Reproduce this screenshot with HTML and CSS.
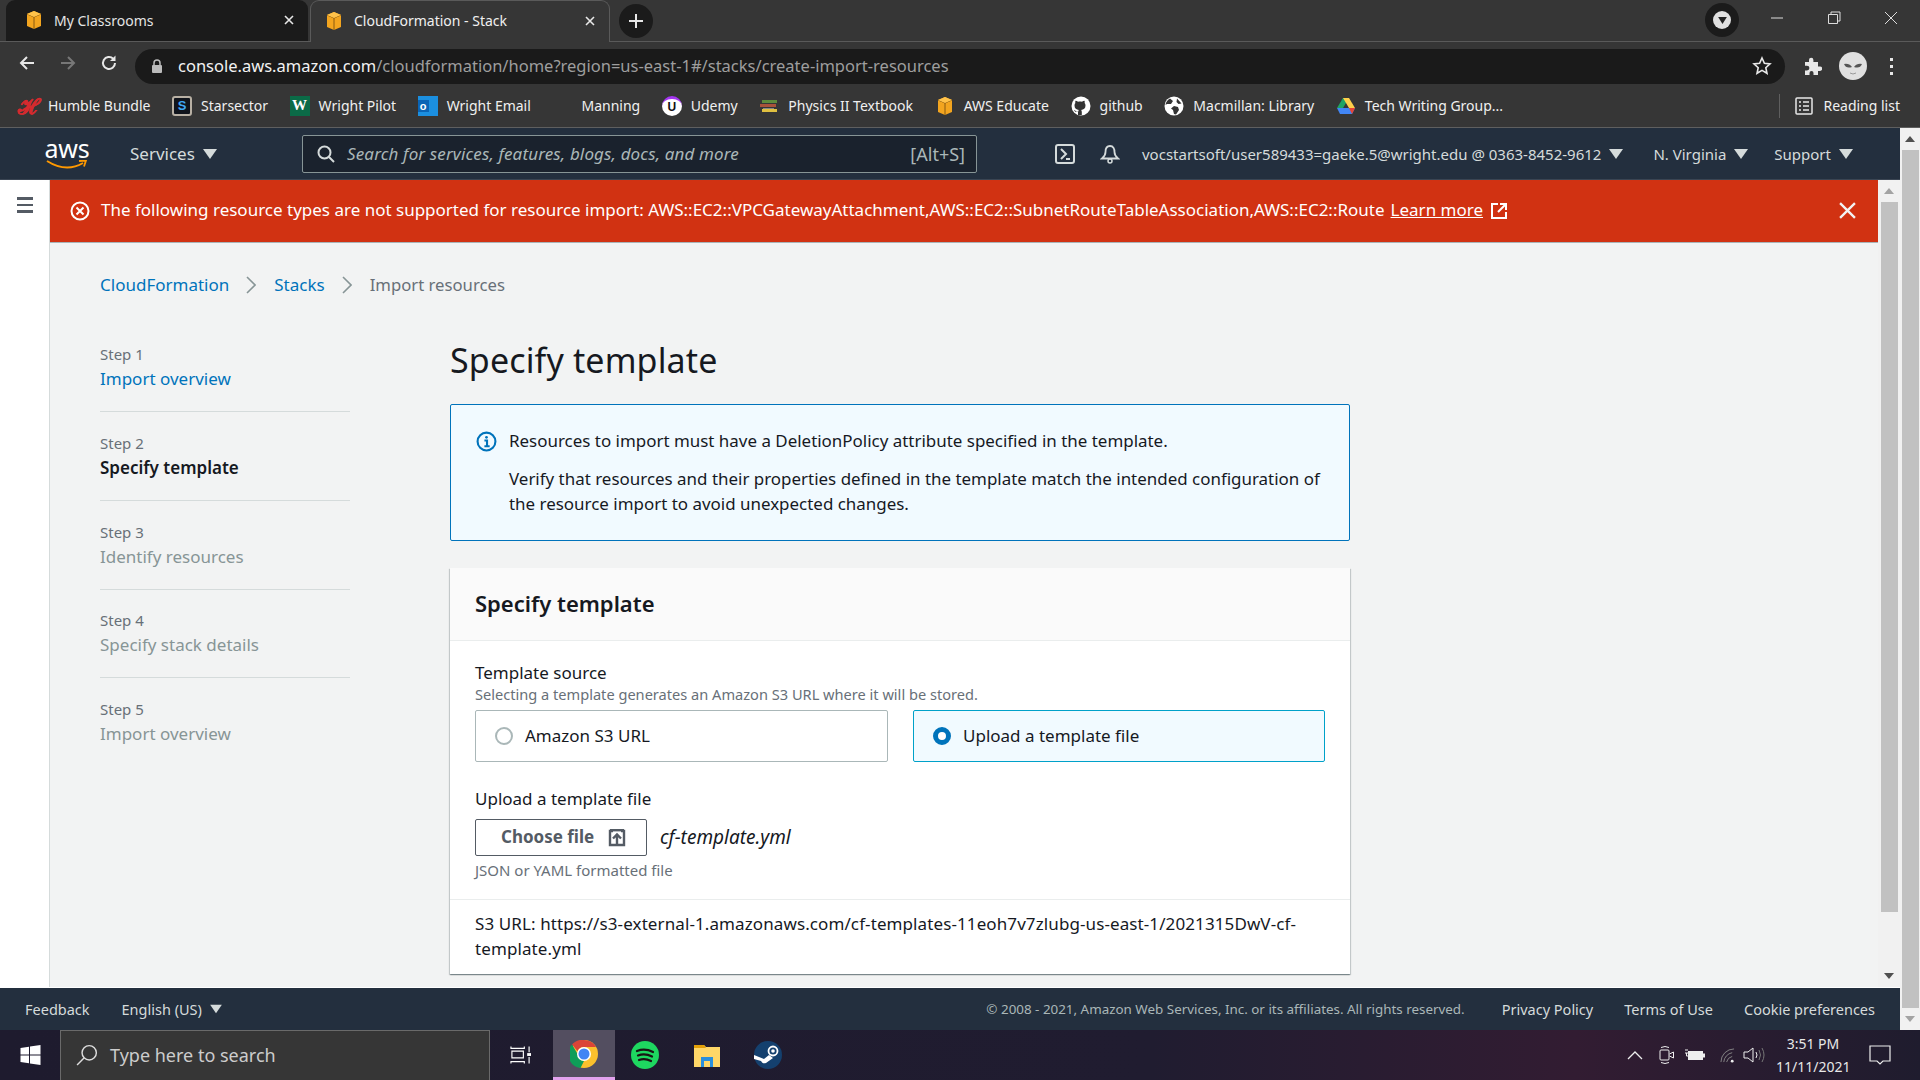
FILE: index.html
```html
<!DOCTYPE html>
<html lang="en">
<head>
<meta charset="utf-8">
<title>CloudFormation - Stack</title>
<link rel="stylesheet" href="styles.css">
</head>
<body>
<svg class="defs" width="0" height="0" aria-hidden="true">
  <symbol id="cube" viewBox="0 0 20 20">
    <path d="M10 1 L17 4 V16 L10 19 L3 16 V4Z" fill="#f3a51f"/>
    <path d="M3 4 L10 7 L17 4" fill="none" stroke="#8a5a10" stroke-width="1"/>
    <path d="M10 7 V19" stroke="#8a5a10" stroke-width="1"/>
    <path d="M10 1 L17 4 L10 7 L3 4Z" fill="#ffc24a"/>
  </symbol>
  <symbol id="caret" viewBox="0 0 14 12"><path d="M0 1 H14 L7 11Z" fill="#d5dbdb"/></symbol>
</svg>
<div class="shell">
  <div class="tabbar">
    <div class="tab tab-off">
      <svg class="tab-ico"><use href="#cube"/></svg>
      <span class="tab-title">My Classrooms</span>
      <svg class="tab-x" viewBox="0 0 10 10"><path d="M1 1 9 9M9 1 1 9" stroke="#e8e8e8" stroke-width="1.6"/></svg>
    </div>
    <div class="tab tab-on">
      <svg class="tab-ico"><use href="#cube"/></svg>
      <span class="tab-title">CloudFormation - Stack</span>
      <svg class="tab-x" viewBox="0 0 10 10"><path d="M1 1 9 9M9 1 1 9" stroke="#e8e8e8" stroke-width="1.6"/></svg>
    </div>
    <div class="newtab"><svg viewBox="0 0 14 14" width="14" height="14"><path d="M7 0V14M0 7H14" stroke="#e8e8e8" stroke-width="2"/></svg></div>
    <div class="spacer"></div>
    <div class="media"><span class="media-dot"><svg viewBox="0 0 10 8" width="9" height="7"><path d="M0 0H10L5 8Z" fill="#222"/></svg></span></div>
    <svg class="win-btn" viewBox="0 0 14 14"><path d="M1 7H13" stroke="#ddd" stroke-width="1"/></svg>
    <svg class="win-btn" viewBox="0 0 14 14"><path d="M1.500 3.500H10.500V12.500H1.500ZM4 3.500V1H13V10H10.500" fill="none" stroke="#ddd" stroke-width="1"/></svg>
    <svg class="win-btn" viewBox="0 0 14 14"><path d="M1 1 13 13M13 1 1 13" stroke="#ddd" stroke-width="1"/></svg>
  </div>

  <div class="toolbar">
    <svg class="nav-ico" viewBox="0 0 18 18"><path d="M16 9H3M9 3 3 9l6 6" fill="none" stroke="#e8e8e8" stroke-width="2"/></svg>
    <svg class="nav-ico" viewBox="0 0 18 18"><path d="M2 9H15M9 3l6 6-6 6" fill="none" stroke="#777" stroke-width="2"/></svg>
    <svg class="nav-ico" viewBox="0 0 18 18"><path d="M15 9a6 6 0 1 1-1.800-4.300" fill="none" stroke="#e8e8e8" stroke-width="2"/><path d="M15.500 1.500V7H10Z" fill="#e8e8e8"/></svg>
    <div class="omnibox">
      <svg class="lock" viewBox="0 0 12 14"><rect x="1" y="6" width="10" height="8" rx="1" fill="#bbb"/><path d="M3 6V4a3 3 0 0 1 6 0v2" fill="none" stroke="#bbb" stroke-width="1.500"/></svg>
      <span class="url"><b>console.aws.amazon.com</b>/cloudformation/home?region=us-east-1#/stacks/create-import-resources</span>
      <svg class="star" viewBox="0 0 20 20"><path d="M10 2l2.400 5.300 5.600.6-4.200 3.800 1.200 5.600L10 14.400l-5 2.900 1.200-5.600L2 7.900l5.600-.6z" fill="none" stroke="#e8e8e8" stroke-width="1.600"/></svg>
    </div>
    <svg class="puzzle" viewBox="0 0 20 20"><path d="M3 6h4V4a2.200 2.200 0 0 1 4.400 0v2H16v4.500h2a2.200 2.200 0 0 1 0 4.400h-2V19H11.500v-2a2 2 0 0 0-4 0v2H3v-4.500h2a2.400 2.400 0 0 0 0-4.800H3z" fill="#e8e8e8"/></svg>
    <div class="avatar"><svg viewBox="0 0 28 28" width="28" height="28"><circle cx="14" cy="14" r="14" fill="#e0e0e0"/><path d="M5 12q5-1 8 3-6 2-8-3ZM23 12q-5-1-8 3 6 2 8-3Z" fill="#555"/><path d="M11 21q3 2 6 0" stroke="#999" fill="none"/></svg></div>
    <div class="kebab"><i></i><i></i><i></i></div>
  </div>

  <div class="bookmarks">
    <div class="bm"><span class="bi bi-h">ℋ</span><span>Humble Bundle</span></div>
    <div class="bm"><span class="bi bi-s">S</span><span>Starsector</span></div>
    <div class="bm"><span class="bi bi-w">W</span><span>Wright Pilot</span></div>
    <div class="bm"><span class="bi bi-o"><span class="bi-o-l">o</span></span><span>Wright Email</span></div>
    <div class="bm"><span class="bi bi-m"></span><span>Manning</span></div>
    <div class="bm"><span class="bi bi-u">U</span><span>Udemy</span></div>
    <div class="bm"><svg class="bi" viewBox="0 0 20 20"><rect x="3" y="4" width="15" height="3" fill="#5d8a3c"/><rect x="1" y="8" width="16" height="3" fill="#a8533a"/><rect x="4" y="12" width="11" height="1" fill="#888"/><rect x="3" y="13" width="15" height="3" fill="#e0c040"/></svg><span>Physics II Textbook</span></div>
    <div class="bm"><svg class="bi"><use href="#cube"/></svg><span>AWS Educate</span></div>
    <div class="bm"><svg class="bi" viewBox="0 0 20 20"><circle cx="10" cy="10" r="9.500" fill="#fff"/><path d="M7 19v-3c-3 .5-3.500-1-4-2 1 0 1.500 1 2 1.500 1 .7 2 .2 2.300 0 0-.8.300-1.200.6-1.500-2.500-.3-4.400-1.500-4.400-4.500 0-1 .3-1.800.9-2.400-.2-.5-.3-1.500.1-2.300 1 0 1.800.4 2.500 1 1.500-.4 2.500-.4 4 0 .7-.6 1.500-1 2.500-1 .4.800.3 1.800.1 2.300.6.6.9 1.400.9 2.400 0 3-1.900 4.200-4.400 4.500.4.400.7 1 .7 2v3z" fill="#333"/></svg><span>github</span></div>
    <div class="bm"><svg class="bi" viewBox="0 0 20 20"><circle cx="10" cy="10" r="9.500" fill="#fff"/><path d="M6 2.500 9 5 7 8 3 8 1.500 9A8.500 8.500 0 0 1 6 2.500ZM10 10l4 1 1 3-3 4.500-2-.5-1-4-2-1.500ZM13 2.500l4.500 5-3 .5-2-2z" fill="#333"/></svg><span>Macmillan: Library</span></div>
    <div class="bm"><svg class="bi" viewBox="0 0 20 20"><path d="M7 2h6L7 12H1z" fill="#1fa463"/><path d="M13 2l6 10h-6L7 2z" fill="#ffd04b"/><path d="M1 12l3 6h12l3-6z" fill="#4286f5"/><path d="M19 12l-3 6-3-6z" fill="#ea4335"/></svg><span>Tech Writing Group...</span></div>
    <div class="spacer"></div>
    <div class="bm-sep"></div>
    <div class="bm bm-last"><svg class="bi" viewBox="0 0 20 20"><rect x="2" y="2" width="16" height="16" rx="1" fill="none" stroke="#e8e8e8" stroke-width="1.500"/><path d="M5 6h2M9 6h6M5 10h2M9 10h6M5 14h2M9 14h6" stroke="#e8e8e8" stroke-width="1.500"/></svg><span>Reading list</span></div>
  </div>

  <div class="viewport">
    <div class="page">
      <header class="awsbar">
        <div class="aws-logo"><span class="aws-word">aws</span><svg viewBox="0 0 42 10" width="42" height="10"><path d="M1 1q19 12 36 2" fill="none" stroke="#f90" stroke-width="2"/><path d="M33 1l7-.5-2 6" fill="none" stroke="#f90" stroke-width="1.800"/></svg></div>
        <div class="menu services"><span>Services</span><svg class="caret"><use href="#caret"/></svg></div>
        <div class="search">
          <svg class="search-ico" viewBox="0 0 18 18"><circle cx="7.500" cy="7.500" r="6" fill="none" stroke="#d5dbdb" stroke-width="2"/><path d="M12 12l5 5" stroke="#d5dbdb" stroke-width="2"/></svg>
          <span class="search-ph">Search for services, features, blogs, docs, and more</span>
          <span class="search-key">[Alt+S]</span>
        </div>
        <svg class="hdr-ico term" viewBox="0 0 20 20"><rect x="1" y="1" width="18" height="18" rx="2" fill="none" stroke="#d5dbdb" stroke-width="2"/><path d="M6 5l5 5-5 5M11 15h4" fill="none" stroke="#d5dbdb" stroke-width="2"/></svg>
        <svg class="hdr-ico bell" viewBox="0 0 20 20"><path d="M10 2c-3.500 0-4.500 3-4.500 6 0 3-1 4.500-3.500 6.500h16C15.500 12.500 14.500 11 14.500 8c0-3-1-6-4.500-6Z" fill="none" stroke="#d5dbdb" stroke-width="1.800"/><circle cx="10" cy="17" r="2" fill="none" stroke="#d5dbdb" stroke-width="1.500"/></svg>
        <div class="menu acct"><span>vocstartsoft/user589433=gaeke.5@wright.edu @ 0363-8452-9612</span><svg class="caret"><use href="#caret"/></svg></div>
        <div class="menu region"><span>N. Virginia</span><svg class="caret"><use href="#caret"/></svg></div>
        <div class="menu support"><span>Support</span><svg class="caret"><use href="#caret"/></svg></div>
      </header>

      <div class="workspace">
        <aside class="rail">
          <div class="burger"><i></i><i></i><i></i></div>
        </aside>
        <main class="main">
          <div class="banner">
            <svg class="banner-ico" viewBox="0 0 20 20"><circle cx="10" cy="10" r="8.500" fill="none" stroke="#fff" stroke-width="2"/><path d="M6.500 6.500l7 7M13.500 6.500l-7 7" stroke="#fff" stroke-width="2"/></svg>
            <span class="banner-text">The following resource types are not supported for resource import: AWS::EC2::VPCGatewayAttachment,AWS::EC2::SubnetRouteTableAssociation,AWS::EC2::Route</span>
            <a class="banner-link">Learn more</a>
            <svg class="banner-ext" viewBox="0 0 18 18"><path d="M8 2H2V16H16V10M10 2h6v6M16 2 8 10" fill="none" stroke="#fff" stroke-width="2"/></svg>
            <div class="spacer"></div>
            <svg class="banner-x" viewBox="0 0 16 16"><path d="M1 1 15 15M15 1 1 15" stroke="#f2f3f3" stroke-width="2.200"/></svg>
          </div>
          <div class="content">
            <nav class="crumbs">
              <a class="link">CloudFormation</a>
              <svg class="crumb-sep" viewBox="0 0 10 18"><path d="M1 1l8 8-8 8" fill="none" stroke="#879596" stroke-width="1.600"/></svg>
              <a class="link">Stacks</a>
              <svg class="crumb-sep" viewBox="0 0 10 18"><path d="M1 1l8 8-8 8" fill="none" stroke="#879596" stroke-width="1.600"/></svg>
              <span class="crumb-now">Import resources</span>
            </nav>
            <div class="wizard">
              <ol class="steps">
                <li class="step"><div class="step-no">Step 1</div><a class="link step-name">Import overview</a></li>
                <li class="step"><div class="step-no">Step 2</div><div class="step-name step-active">Specify template</div></li>
                <li class="step"><div class="step-no">Step 3</div><div class="step-name step-off">Identify resources</div></li>
                <li class="step"><div class="step-no">Step 4</div><div class="step-name step-off">Specify stack details</div></li>
                <li class="step step-last"><div class="step-no">Step 5</div><div class="step-name step-off">Import overview</div></li>
              </ol>
              <section class="form">
                <h1 class="title">Specify template</h1>
                <div class="info">
                  <svg class="info-ico" viewBox="0 0 20 20"><circle cx="10" cy="10" r="8.500" fill="none" stroke="#0073bb" stroke-width="2"/><circle cx="10" cy="6" r="1.300" fill="#0073bb"/><path d="M8 9h2.500v5M8 14.500h5" fill="none" stroke="#0073bb" stroke-width="2"/></svg>
                  <div class="info-body">
                    <p>Resources to import must have a DeletionPolicy attribute specified in the template.</p>
                    <p>Verify that resources and their properties defined in the template match the intended configuration of the resource import to avoid unexpected changes.</p>
                  </div>
                </div>
                <div class="card">
                  <div class="card-head"><h2>Specify template</h2></div>
                  <div class="card-body">
                    <div class="label">Template source</div>
                    <div class="hint">Selecting a template generates an Amazon S3 URL where it will be stored.</div>
                    <div class="tiles">
                      <div class="tile"><span class="radio"></span><span>Amazon S3 URL</span></div>
                      <div class="tile tile-on"><span class="radio radio-on"></span><span>Upload a template file</span></div>
                    </div>
                    <div class="label label-up">Upload a template file</div>
                    <div class="file-row">
                      <div class="btn"><span>Choose file</span><svg class="btn-ico" viewBox="0 0 18 18"><path d="M5 2H2V16H16V2H13" fill="none" stroke="#545b64" stroke-width="2.400"/><path d="M2 1.200H16" stroke="#545b64" stroke-width="2.400"/><path d="M9 16V6M5 9.500l4-4 4 4" fill="none" stroke="#545b64" stroke-width="2.400"/></svg></div>
                      <span class="file-name">cf-template.yml</span>
                    </div>
                    <div class="hint hint-file">JSON or YAML formatted file</div>
                  </div>
                  <div class="card-foot">S3 URL: https://s3-external-1.amazonaws.com/cf-templates-11eoh7v7zlubg-us-east-1/2021315DwV-cf-template.yml</div>
                </div>
              </section>
            </div>
          </div>
        </main>
        <div class="sb sb-inner">
          <svg class="sb-arrow" viewBox="0 0 10 6"><path d="M0 6H10L5 0Z" fill="#a3a3a3"/></svg>
          <div class="sb-thumb"></div>
          <svg class="sb-arrow" viewBox="0 0 10 6"><path d="M0 0H10L5 6Z" fill="#505050"/></svg>
        </div>
      </div>

      <footer class="foot">
        <span>Feedback</span>
        <div class="menu lang"><span>English (US)</span><svg class="caret"><use href="#caret"/></svg></div>
        <div class="spacer"></div>
        <span class="copy">© 2008 - 2021, Amazon Web Services, Inc. or its affiliates. All rights reserved.</span>
        <span class="foot-l1">Privacy Policy</span>
        <span class="foot-l">Terms of Use</span>
        <span class="foot-l">Cookie preferences</span>
      </footer>
    </div>
    <div class="sb sb-outer">
      <svg class="sb-arrow" viewBox="0 0 10 6"><path d="M0 6H10L5 0Z" fill="#505050"/></svg>
      <div class="sb-thumb"></div>
      <svg class="sb-arrow" viewBox="0 0 10 6"><path d="M0 0H10L5 6Z" fill="#a3a3a3"/></svg>
    </div>
  </div>

  <div class="taskbar">
    <svg class="winlogo" viewBox="0 0 20 20"><path d="M0 3l8.500-1.200V9.500H0ZM9.500 1.600 20 0V9.500H9.500ZM0 10.500h8.500v7.700L0 17ZM9.500 10.500H20V20L9.500 18.400Z" fill="#fff"/></svg>
    <div class="ts-box">
      <svg class="ts-ico" viewBox="0 0 20 20"><circle cx="12" cy="8" r="6.500" fill="none" stroke="#ddd" stroke-width="1.300"/><path d="M7.500 12.500 1 19" stroke="#ddd" stroke-width="1.300"/></svg>
      <span>Type here to search</span>
    </div>
    <svg class="tv" viewBox="0 0 22 20"><path d="M1 1v2H15V1M2 6H14V13H2ZM1 19v-2H15v2M20 1V7M20 12V19" fill="none" stroke="#fff" stroke-width="1.200"/><rect x="18" y="8" width="4" height="3" fill="#fff"/></svg>
    <div class="app app-on"><svg viewBox="0 0 28 28" width="28" height="28"><circle cx="14" cy="14" r="14" fill="#fbc02d"/><path d="M14 0a14 14 0 0 1 12.100 7H14a7 7 0 0 0-6.400 4.200L2 4.500A14 14 0 0 1 14 0Z" fill="#db4437"/><path d="M2 4.500 8 14.800a7 7 0 0 0 6 6.200L10.500 28A14 14 0 0 1 2 4.500Z" fill="#0f9d58"/><circle cx="14" cy="14" r="7" fill="#fff"/><circle cx="14" cy="14" r="5.500" fill="#4285f4"/></svg></div>
    <div class="app"><svg viewBox="0 0 28 28" width="28" height="28"><circle cx="14" cy="14" r="14" fill="#1ed760"/><path d="M6 10q8-3 16 1M7 14.500q7-2.500 14 1M8 19q6-2 12 1" fill="none" stroke="#191414" stroke-width="2.200" stroke-linecap="round"/></svg></div>
    <div class="app"><svg viewBox="0 0 28 28" width="28" height="28"><path d="M1 4h10l2 2H27V26H1Z" fill="#ffd768"/><path d="M1 4h10l2 3H1Z" fill="#e3a008"/><path d="M8 26V16H20V26H17V20H11V26Z" fill="#2a8fdc"/></svg></div>
    <div class="app"><svg viewBox="0 0 28 28" width="28" height="28"><circle cx="14" cy="14" r="14" fill="#14406e"/><circle cx="19" cy="10" r="4.500" fill="none" stroke="#fff" stroke-width="1.800"/><circle cx="19" cy="10" r="1.800" fill="#fff"/><path d="M0 14 10 18l5-4 4 3-7 5a4 4 0 0 1-5-2L0 18Z" fill="#fff"/></svg></div>
    <div class="spacer"></div>
    <div class="tray">
      <svg class="t-chev" viewBox="0 0 16 10"><path d="M1 9l7-7 7 7" fill="none" stroke="#eee" stroke-width="1.300"/></svg>
      <svg class="t-ic" viewBox="0 0 16 20"><rect x="1" y="5" width="9" height="10" rx="1" fill="none" stroke="#eee"/><path d="M10.500 9l4-2v6l-4-2M2 2.500q4-2 8 0M2 17.500q4 2 8 0" fill="none" stroke="#eee"/></svg>
      <svg class="t-bat" viewBox="0 0 20 14"><path d="M0 2h3M0 5h3M1.500 5v3h2" stroke="#eee" fill="none"/><rect x="3" y="3" width="15" height="9" fill="#eee"/><rect x="18" y="5.500" width="2" height="4" fill="#eee"/></svg>
      <svg class="t-wifi" viewBox="0 0 16 16"><path d="M1 15A14 14 0 0 1 15 1M4 15A11 11 0 0 1 13 5M7 15a8 8 0 0 1 6-6" fill="none" stroke="#888" stroke-width="1"/><circle cx="13" cy="14" r="1.500" fill="#eee"/></svg>
      <svg class="t-snd" viewBox="0 0 22 20"><path d="M1 7H5L10 3V17L5 13H1Z" fill="none" stroke="#eee"/><path d="M13 7q2 3 0 6" fill="none" stroke="#eee"/><path d="M16 5q3 5 0 10M19 3q4 7 0 14" fill="none" stroke="#777"/></svg>
      <div class="clock"><div>3:51 PM</div><div>11/11/2021</div></div>
      <svg class="t-note" viewBox="0 0 22 20"><path d="M1 1H21V16H14L11 19 8 16H1Z" fill="none" stroke="#eee" stroke-width="1.200"/></svg>
    </div>
  </div>
</div>
</body>
</html>
```

FILE: styles.css
```css
* { box-sizing: border-box; }
html, body { margin: 0; padding: 0; height: 1080px; overflow: hidden; }
body { font-family: "Noto Sans", "Open Sans", sans-serif; font-size: 17px; color: #16191f; }
p, h1, h2, ol { margin: 0; padding: 0; }
.defs { position: absolute; }
.spacer { flex: 1; }
.shell { width: 1920px; height: 1080px; display: flex; flex-direction: column; }

/* browser tabs */
.tabbar { height: 42px; background: #363636; display: flex; align-items: flex-end; padding: 0 22px 0 6px; border-bottom: 1px solid #5a5a5a; flex: none; }
.tab { width: 302px; height: 41px; display: flex; align-items: center; padding-left: 18px; padding-right: 14px; padding-bottom: 1px; font-size: 14px; color: #e4e4e4; border-radius: 9px 9px 0 0; }
.tab-off { background: #1b1b1b; }
.tab-on { background: #363636; border: 1px solid #5a5a5a; border-bottom: 0; margin-left: 2px; width: 300px; height: 42px; margin-bottom: -1px; padding-left: 13px; padding-bottom: 2px; color: #f0f0f0; }
.tab-ico { width: 20px; height: 20px; flex: none; margin-right: 10px; }
.tab-title { flex: 1; }
.tab-x { width: 10px; height: 12px; }
.newtab { width: 34px; height: 34px; border-radius: 50%; background: #1b1b1b; display: flex; align-items: center; justify-content: center; margin: 0 0 3px 9px; }
.media { width: 34px; height: 34px; border-radius: 50%; background: #1b1b1b; display: flex; align-items: center; justify-content: center; margin: 0 0 4px 0; }
.media-dot { width: 18px; height: 18px; border-radius: 50%; background: #e0e0e0; display: flex; align-items: center; justify-content: center; }
.win-btn { width: 14px; height: 14px; margin: 0 0 16px 31px; }
.win-btn + .win-btn { margin-left: 43px; }

/* toolbar */
.toolbar { height: 42px; background: #363636; display: flex; align-items: center; padding-left: 18px; flex: none; }
.nav-ico { width: 18px; height: 18px; margin-right: 23px; flex: none; }
.omnibox { width: 1650px; margin-left: -6px; margin-top: 6px; height: 35px; border-radius: 18px; background: #1a1a1a; display: flex; align-items: center; padding-left: 16px; padding-right: 13px; flex: none; }
.lock { width: 12px; height: 14px; margin-right: 15px; }
.url { flex: 1; font-size: 16.500px; color: #9e9e9e; white-space: nowrap; padding-bottom: 2px; }
.url b { font-weight: 400; color: #f2f2f2; }
.star { width: 20px; height: 20px; }
.puzzle { width: 20px; height: 20px; margin: 6px 0 0 17px; flex: none; }
.avatar { width: 28px; height: 28px; margin: 6px 0 0 17px; flex: none; }
.kebab { width: 4px; margin: 6px 0 0 23px; display: flex; flex-direction: column; gap: 4px; flex: none; }
.kebab i { width: 3px; height: 3px; background: #e8e8e8; display: block; }

/* bookmarks */
.bookmarks { height: 44px; background: #363636; border-bottom: 1px solid #5f5f5f; display: flex; align-items: center; padding: 0 20px 0 19px; gap: 21.600px; font-size: 14px; color: #f0f0f0; flex: none; }
.bm { display: flex; align-items: center; gap: 9px; white-space: nowrap; }
.bi { width: 20px; height: 20px; flex: none; display: flex; align-items: center; justify-content: center; }
.bi-h { font: 700 21px "DejaVu Serif", serif; color: #d42a2e; -webkit-text-stroke: .5px #d42a2e; }
.bi-s { background: #10141c; border: 2px solid #b8b0a4; border-radius: 3px; color: #3fa9f5; font: 700 13px "Liberation Sans", sans-serif; }
.bi-w { background: #0b6b47; color: #fff; font: 700 15px "Liberation Serif", serif; }
.bi-o { background: #1b8fe0; position: relative; justify-content: flex-start; }
.bi-o-l { background: #0a64b5; color: #fff; font: 700 11px "Liberation Sans", sans-serif; width: 11px; height: 12px; display: flex; align-items: center; justify-content: center; }
.bi-m { background: transparent; }
.bi-u { background: #fff; border-radius: 50%; color: #111; font: 700 12px "Liberation Sans", sans-serif; border-top: 3px solid #a435f0; }
.bm-sep { width: 1px; height: 24px; background: #5f5f5f; margin-right: -7px; }
.bm-last { margin-left: 0; }

/* viewport */
.viewport { flex: 1; display: flex; min-height: 0; }
.page { width: 1900px; display: flex; flex-direction: column; }
.sb { background: #f1f1f1; display: flex; flex-direction: column; align-items: center; flex: none; }
.sb-outer { width: 20px; padding-top: 0; }
.sb-inner { width: 22px; }
.sb-arrow { width: 10px; height: 6px; margin: 8px 0; flex: none; }
.sb-thumb { flex: 1; width: 17px; background: #c1c1c1; }
.sb-inner .sb-thumb { flex: none; height: 710px; margin-bottom: auto; }

/* aws header */
.awsbar { height: 52px; background: #232f3e; border-bottom: 1px solid #3a4553; display: flex; align-items: center; padding-left: 46px; color: #d5dbdb; flex: none; }
.aws-logo { width: 42px; height: 36px; display: flex; flex-direction: column; align-items: center; margin-right: 42px; }
.aws-word { color: #fff; font-size: 25px; line-height: 24px; height: 24px; letter-spacing: -.2px; font-weight: 400; }
.menu { display: flex; align-items: center; gap: 8px; white-space: nowrap; }
.caret { width: 14px; height: 12px; }
.services { width: 172px; }
.search { width: 675px; height: 38px; background: #1a222d; border: 1px solid #879596; border-radius: 2px; display: flex; align-items: center; padding: 0 11px 0 14px; }
.search-ico { width: 18px; height: 18px; margin-right: 12px; }
.search-ph { flex: 1; font-style: italic; color: #aab7b8; letter-spacing: .14px; }
.search-key { color: #aab7b8; font-size: 18px; }
.hdr-ico { width: 20px; height: 20px; flex: none; }
.term { margin-left: 78px; }
.bell { margin-left: 25px; }
.acct { margin-left: 22px; font-size: 15px; }
.region { margin-left: 30px; font-size: 15px; }
.support { margin-left: 26px; font-size: 15px; }

/* workspace */
.workspace { height: 807px; flex: none; display: flex; min-height: 0; }
.rail { width: 50px; background: #fff; border-right: 1px solid #d5dbdb; padding: 17px 0 0 17px; flex: none; }
.burger { width: 16px; display: flex; flex-direction: column; gap: 4px; }
.burger i { display: block; height: 2.500px; background: #545b64; }
.main { width: 1828px; overflow: hidden; background: #f2f3f3; display: flex; flex-direction: column; }
.banner { height: 63px; background: #d13212; border-bottom: 1px solid #a9b4b8; display: flex; align-items: center; padding: 0 22px 1px 20px; color: #fff; flex: none; font-weight: 400; }
.banner-ico { width: 20px; height: 20px; margin-right: 11px; flex: none; }
.banner-text { white-space: nowrap; padding-bottom: 2px; }
.banner-link { margin-left: 6px; padding-bottom: 2px; text-decoration: underline; white-space: nowrap; }
.banner-ext { width: 18px; height: 18px; margin-left: 7px; }
.banner-x { width: 17px; height: 17px; }

.content { padding: 31px 0 0 50px; flex: 1; }
.link { color: #0073bb; }
.crumbs { display: flex; align-items: center; height: 22px; line-height: 22px; }
.crumb-sep { width: 10px; height: 18px; margin: 0 18px 0 17px; }
.crumb-now { color: #687078; font-size: 16.700px; }
.wizard { display: grid; grid-template-columns: 250px 900px; column-gap: 100px; margin-top: 42px; }
.steps { list-style: none; padding-top: 6px; }
.step { padding-bottom: 21px; border-bottom: 1px solid #d5dbdb; margin-bottom: 20.750px; }
.step-last { border-bottom: 0; }
.step-no { font-size: 15px; line-height: 20px; color: #687078; margin-bottom: 4px; }
.step-name { display: block; line-height: 22px; }
.step-active { font-weight: 600; color: #16191f; }
.step-off { color: #879596; }

.title { font-size: 34px; line-height: 44px; font-weight: 400; margin-bottom: 22px; letter-spacing: .15px; }
.info { height: 137px; background: #f1faff; border: 1px solid #0073bb; border-radius: 2px; display: flex; padding: 23px 20px 0 25px; margin-bottom: 27px; }
.info-ico { width: 21px; height: 21px; margin-top: 3px; margin-right: 12px; flex: none; }
.info-body { line-height: 25px; font-size: 16.950px; }
.info-body p + p { margin-top: 13px; }
.card { height: 406px; background: #fff; box-shadow: 0 1px 1px 0 rgba(0,28,36,.3), 1px 1px 1px 0 rgba(0,28,36,.15), -1px 1px 1px 0 rgba(0,28,36,.15); display: flex; flex-direction: column; }
.card-head { height: 73px; background: #fafafa; border-bottom: 1px solid #eaeded; padding: 0 0 2px 25px; display: flex; align-items: center; }
.card-head h2 { font-size: 22px; font-weight: 600; }
.card-body { padding: 21px 25px 0; height: 259px; border-bottom: 1px solid #eaeded; }
.label { line-height: 22px; }
.hint { font-size: 14.600px; line-height: 20px; color: #687078; }
.tiles { display: grid; grid-template-columns: 413px 412px; column-gap: 25px; margin-top: 6px; }
.tile { height: 52px; border: 1px solid #aab7b8; border-radius: 2px; display: flex; align-items: center; padding: 0 0 0 19px; gap: 12px; }
.tile span:last-child { padding-bottom: 2px; }
.tile-on { background: #f1faff; border-color: #00a1c9; }
.radio { width: 18px; height: 18px; border-radius: 50%; border: 2px solid #aab7b8; background: #fff; flex: none; }
.radio-on { border: 5px solid #0073bb; }
.label-up { margin-top: 26px; }
.file-row { display: flex; align-items: center; margin-top: 9px; gap: 13px; }
.btn { width: 172px; height: 37px; border: 1px solid #545b64; border-radius: 2px; display: flex; align-items: center; padding-left: 25px; gap: 14px; font-weight: 700; color: #545b64; flex: none; }
.btn span { padding-bottom: 2px; }
.btn-ico { width: 18px; height: 18px; flex: none; }
.file-name { font-style: italic; font-size: 19px; padding-bottom: 2px; }
.hint-file { margin-top: 4px; font-size: 15px; }
.card-foot { padding: 11px 25px 0; line-height: 25px; letter-spacing: .1px; }

/* footer */
.foot { height: 43px; background: #232f3e; border-top: 1px solid #fff; display: flex; align-items: center; padding: 0 25px; font-size: 14.500px; color: #d5dbdb; flex: none; }
.lang { margin-left: 32px; }
.lang .caret { width: 12px; height: 10px; }
.copy { font-size: 13.400px; color: #aab7b8; }
.foot-l1 { margin-left: 37px; }
.foot-l { margin-left: 31px; }

/* taskbar */
.taskbar { height: 50px; flex: none; background: linear-gradient(90deg, #1e1b2e 0%, #201c30 60%, #321c32 82%, #1f1c2e 100%); display: flex; align-items: center; color: #ddd; position: relative; }
.winlogo { width: 21px; height: 20px; margin-left: 20px; margin-right: 19px; flex: none; }
.ts-box { width: 430px; height: 50px; background: #363636; border: 1px solid #6a6a6a; border-bottom: 0; display: flex; align-items: center; padding-left: 15px; padding-bottom: 1px; gap: 12px; font-size: 18px; color: #ccc; flex: none; }
.ts-ico { width: 22px; height: 22px; }
.tv { width: 21px; height: 20px; margin: 0 22px 0 20px; flex: none; }
.app { width: 61.500px; height: 50px; display: flex; align-items: center; justify-content: center; flex: none; }
.app-on { background: #534e60; border-bottom: 3px solid #e2a2ee; }
.tray { display: flex; align-items: center; padding-right: 29px; }
.t-chev { width: 16px; height: 10px; margin-right: 16px; }
.t-ic { width: 16px; height: 20px; margin-right: 10px; }
.t-bat { width: 20px; height: 14px; margin-right: 15px; }
.t-wifi { width: 15px; height: 15px; margin-right: 8px; }
.t-snd { width: 22px; height: 20px; margin-right: 11px; }
.clock { width: 74px; font-size: 14px; line-height: 23px; text-align: center; color: #e8e8e8; white-space: nowrap; margin-right: 19px; }
.t-note { width: 22px; height: 20px; }
```
